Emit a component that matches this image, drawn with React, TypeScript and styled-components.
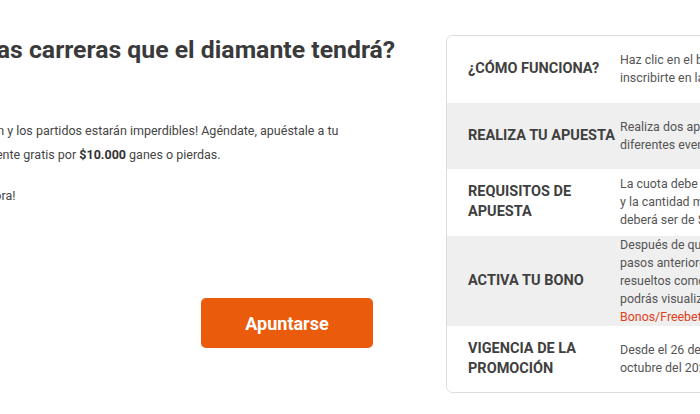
import React from "react";
import styled, { createGlobalStyle } from "styled-components";

const Global = createGlobalStyle`
  body { margin: 0; font-family: Roboto, "Liberation Sans", sans-serif; background: #fff; }
`;

const Page = styled.div`
  width: 700px; height: 414px; overflow: hidden;
`;
const Content = styled.div<{ $shift: number }>`
  display: flex; margin-left: ${p => -p.$shift}px; align-items: flex-start; gap: 36px;
`;
const LeftCol = styled.div<{ $width: number }>`
  flex: 0 0 ${p => p.$width}px; display: flex; flex-direction: column; padding-top: 35px;
`;
const Title = styled.h2`
  margin: 0; font-size: 24.8px; line-height: 30px; font-weight: 700; color: #3a3a3a; white-space: nowrap;
`;
const Para = styled.p`
  margin: 0; font-size: 12.5px; line-height: 24px; color: #454545; white-space: nowrap;
  & + & { margin-top: 17px; }
  &:first-of-type { margin-top: 54px; }
  b { color: #333; }
`;
const ButtonRow = styled.div`
  display: flex; justify-content: flex-end; padding-right: 37px; margin-top: 90px;
`;
const CTA = styled.button`
  width: 172px; height: 50px; border: none; border-radius: 5px; background: #ea5b0c;
  color: #fff; font-family: Roboto, sans-serif; font-weight: 700; font-size: 18px; cursor: pointer;
`;
const Card = styled.div`
  flex: 0 0 420px; margin-top: 35px; border: 1px solid #dcdcdc; border-radius: 7px; overflow: hidden;
  display: flex; flex-direction: column;
`;
const Row = styled.div<{ $shade: boolean }>`
  display: flex; align-items: center; min-height: 66.5px; background: ${p => (p.$shade ? "#efefef" : "#fff")};
`;
const Label = styled.div`
  flex: 0 0 147px; padding-left: 21px; font-size: 14.5px; line-height: 20px; font-weight: 700; color: #3f3f3f;
`;
const Desc = styled.div`
  flex: 1; padding-left: 5px; font-size: 12.4px; line-height: 18px; color: #555; white-space: nowrap;
`;
const Link = styled.span`
  color: #e2401c;
`;

const rows: { label: React.ReactNode; text: React.ReactNode }[] = [
  { label: "¿CÓMO FUNCIONA?", text: <>Haz clic en el botón “Apuntarse” para<br />inscribirte en la promoción.</> },
  { label: "REALIZA TU APUESTA", text: <>Realiza dos apuestas sencillas en<br />diferentes eventos de béisbol.</> },
  { label: <>REQUISITOS DE<br />APUESTA</>, text: <>La cuota debe ser mínimo de 1.50<br />y la cantidad mínima de apuesta<br />deberá ser de $10.000.</> },
  {
    label: "ACTIVA TU BONO",
    text: <>Después de que completes los<br />pasos anteriores y tus apuestas sean<br />resueltos como ganadas o perdidas,<br />podrás visualizar tu bono en<br /><Link>Bonos/Freebets.</Link></>,
  },
  { label: <>VIGENCIA DE LA<br />PROMOCIÓN</>, text: <>Desde el 26 de septiembre hasta el 31 de<br />octubre del 2022.</> },
];

const SHIFT = 267;

export default function App() {
  return (
    <Page>
      <Global />
      <Content $shift={SHIFT}>
        <LeftCol $width={SHIFT + 410}>
          <Title>¿Estás listo para todas las carreras que el diamante tendrá?</Title>
          <Para>
            ¡La temporada del béisbol está en intensa acción y los partidos estarán imperdibles! Agéndate, apuéstale a tu<br />
            equipo favorito para obtener una apuesta realmente gratis por <b>$10.000</b> ganes o pierdas.
          </Para>
          <Para>¡Qué esperas, únete a la emoción y apúntate ahora!</Para>
          <ButtonRow><CTA>Apuntarse</CTA></ButtonRow>
        </LeftCol>
        <Card>
          {rows.map((r, i) => (
            <Row key={i} $shade={i % 2 === 1}>
              <Label>{r.label}</Label>
              <Desc>{r.text}</Desc>
            </Row>
          ))}
        </Card>
      </Content>
    </Page>
  );
}
